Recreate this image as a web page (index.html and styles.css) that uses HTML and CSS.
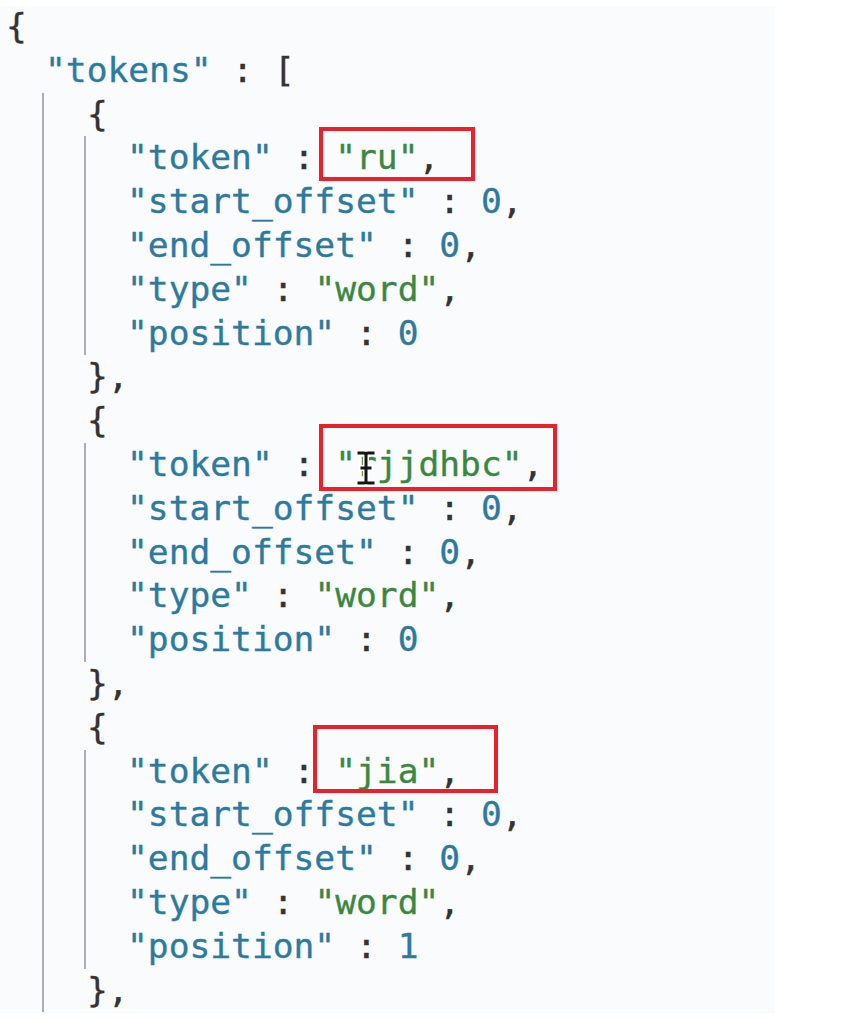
FILE: index.html
```html
<!DOCTYPE html>
<html>
<head>
<meta charset="utf-8">
<link rel="stylesheet" href="styles.css">
</head>
<body>
<div class="panel">
  <div class="code">
    <div class="ln"><span class="p">{</span></div>
    <div class="ln c2"><span class="k">"tokens"</span><span class="p"> : [</span></div>
    <div class="lvl1">
      <div class="ln c4"><span class="p">{</span></div>
      <div class="lvl2">
        <div class="ln c6"><span class="k">"token"</span><span class="p"> : </span><span class="s">"ru"</span><span class="p">,</span></div>
        <div class="ln c6"><span class="k">"start_offset"</span><span class="p"> : </span><span class="n">0</span><span class="p">,</span></div>
        <div class="ln c6"><span class="k">"end_offset"</span><span class="p"> : </span><span class="n">0</span><span class="p">,</span></div>
        <div class="ln c6"><span class="k">"type"</span><span class="p"> : </span><span class="s">"word"</span><span class="p">,</span></div>
        <div class="ln c6"><span class="k">"position"</span><span class="p"> : </span><span class="n">0</span></div>
      </div>
      <div class="ln c4"><span class="p">},</span></div>
      <div class="ln c4"><span class="p">{</span></div>
      <div class="lvl2">
        <div class="ln c6"><span class="k">"token"</span><span class="p"> : </span><span class="s">"rjjdhbc"</span><span class="p">,</span></div>
        <div class="ln c6"><span class="k">"start_offset"</span><span class="p"> : </span><span class="n">0</span><span class="p">,</span></div>
        <div class="ln c6"><span class="k">"end_offset"</span><span class="p"> : </span><span class="n">0</span><span class="p">,</span></div>
        <div class="ln c6"><span class="k">"type"</span><span class="p"> : </span><span class="s">"word"</span><span class="p">,</span></div>
        <div class="ln c6"><span class="k">"position"</span><span class="p"> : </span><span class="n">0</span></div>
      </div>
      <div class="ln c4"><span class="p">},</span></div>
      <div class="ln c4"><span class="p">{</span></div>
      <div class="lvl2">
        <div class="ln c6"><span class="k">"token"</span><span class="p"> : </span><span class="s">"jia"</span><span class="p">,</span></div>
        <div class="ln c6"><span class="k">"start_offset"</span><span class="p"> : </span><span class="n">0</span><span class="p">,</span></div>
        <div class="ln c6"><span class="k">"end_offset"</span><span class="p"> : </span><span class="n">0</span><span class="p">,</span></div>
        <div class="ln c6"><span class="k">"type"</span><span class="p"> : </span><span class="s">"word"</span><span class="p">,</span></div>
        <div class="ln c6"><span class="k">"position"</span><span class="p"> : </span><span class="n">1</span></div>
      </div>
      <div class="ln c4"><span class="p">},</span></div>
    </div>
  </div>
  <div class="mark mark1"></div>
  <div class="mark mark2"></div>
  <div class="mark mark3"></div>
  <svg class="ibeam" width="20" height="36" viewBox="0 0 20 36">
    <path d="M3 3 H8 Q10 3 10 5 Q10 3 12 3 H17 M10 5 V31 M3 33 H8 Q10 33 10 31 Q10 33 12 33 H17 M6 18 H14" fill="none" stroke="#ffffff" stroke-width="6" stroke-linecap="square"/>
    <path d="M3 3 H8 Q10 3 10 5 Q10 3 12 3 H17 M10 5 V31 M3 33 H8 Q10 33 10 31 Q10 33 12 33 H17 M6 18 H14" fill="none" stroke="#151515" stroke-width="3" stroke-linecap="square"/>
  </svg>
</div>
</body>
</html>
```

FILE: styles.css
```css
html, body {
  margin: 0;
  padding: 0;
  background: #ffffff;
}
.panel {
  position: relative;
  margin-top: 6px;
  width: 775px;
  height: 1007px;
  background: #fafbfd;
  overflow: hidden;
}
.code {
  margin-top: -1px;
  padding-left: 6px;
  font-family: "DejaVu Sans Mono", "Liberation Mono", monospace;
  font-size: 34.6px;
  line-height: 43.8px;
  color: #333333;
  -webkit-text-stroke: 0.35px currentColor;
}
.ln {
  height: 43.8px;
  white-space: pre;
}
.c2 { padding-left: 39px; }
.lvl1 {
  margin-left: 36px;
  border-left: 2px solid #abaeb5;
}
.c4 { padding-left: 43px; }
.lvl2 {
  margin-left: 40px;
  border-left: 2px solid #abaeb5;
}
.c6 { padding-left: 41px; }
.p { color: #333333; }
.k { color: #2d7a9f; }
.n { color: #2d7a9f; }
.s { color: #3a883f; }
.mark {
  position: absolute;
  border: 4px solid #e9212b;
  box-sizing: border-box;
}
.mark1 { left: 319px; top: 121px; width: 156px; height: 54px; }
.mark2 { left: 319px; top: 418px; width: 238px; height: 67px; }
.mark3 { left: 313px; top: 719px; width: 185px; height: 68px; }
.ibeam {
  position: absolute;
  left: 356px;
  top: 444px;
}
```
